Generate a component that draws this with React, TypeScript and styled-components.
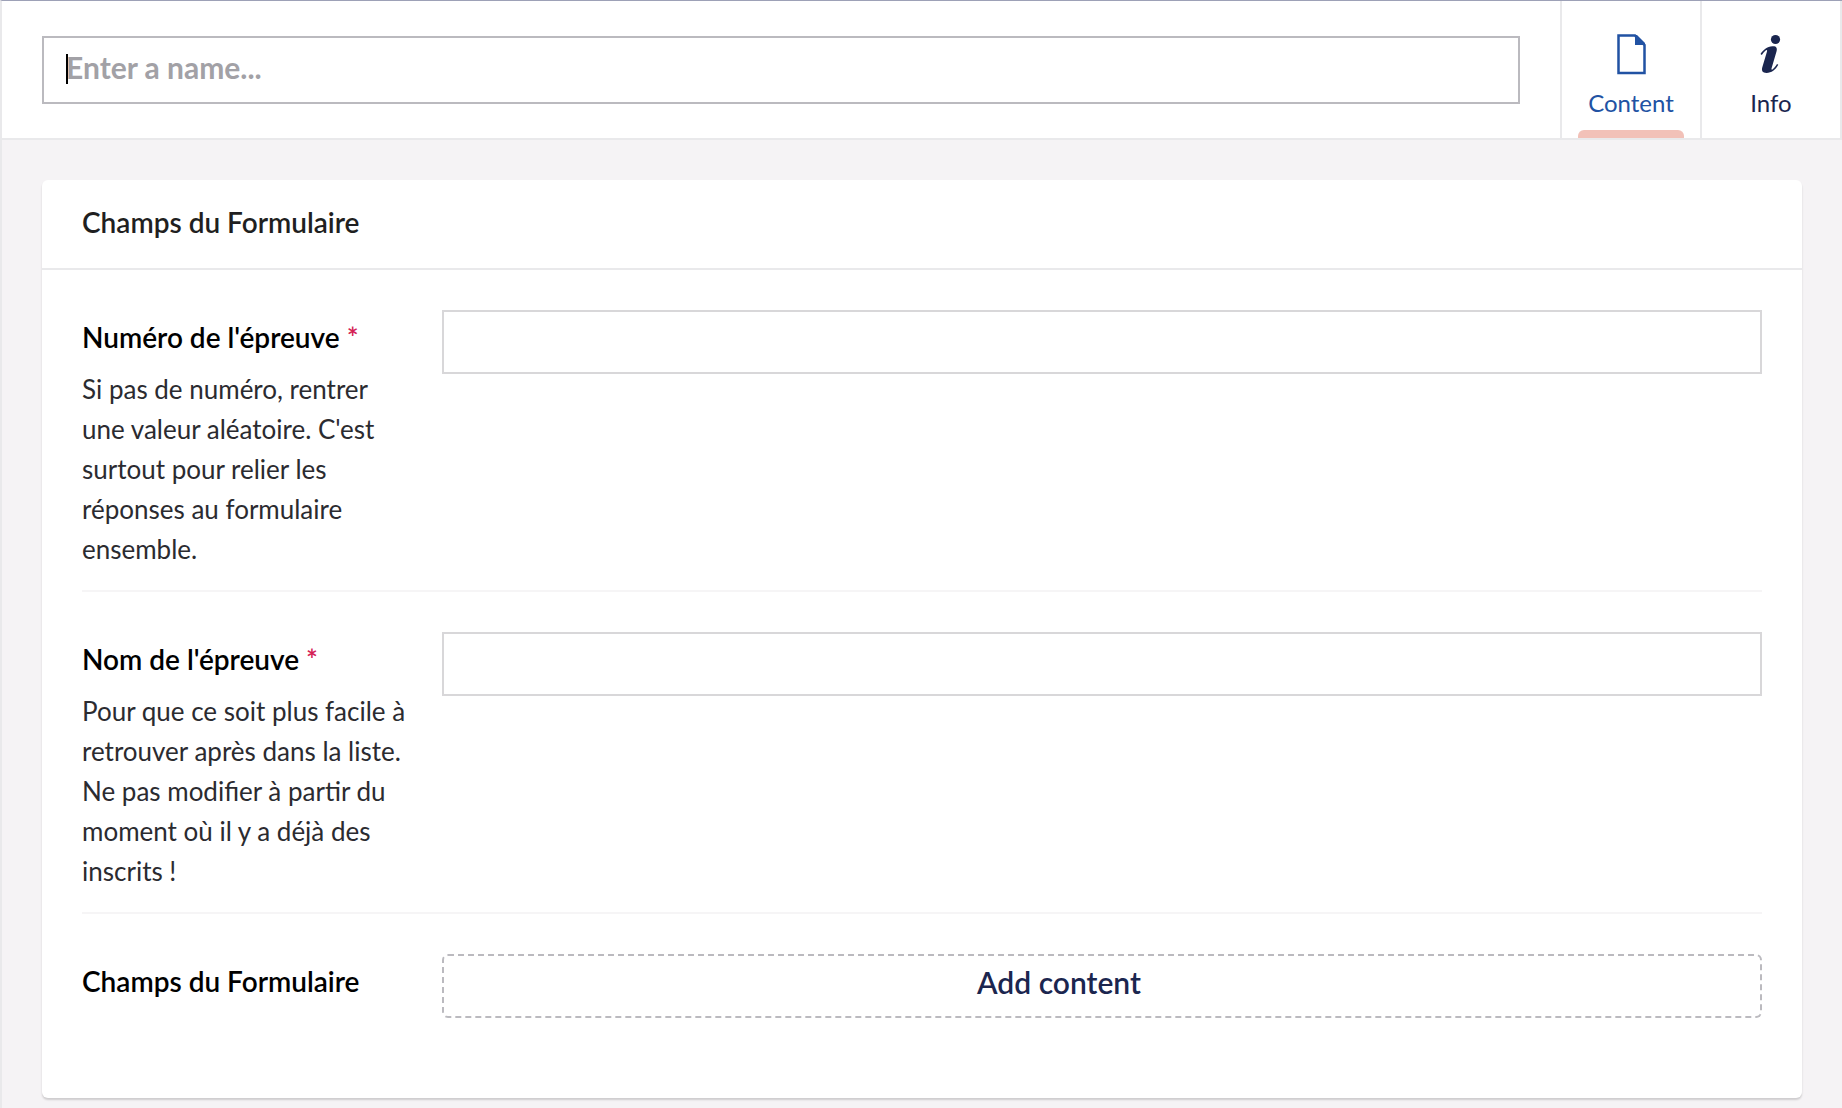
import React from "react";
import styled, { createGlobalStyle } from "styled-components";

const GlobalStyle = createGlobalStyle`
  *, *::before, *::after { box-sizing: border-box; }
  body {
    margin: 0;
    background: #f5f3f5;
    color: #000;
    font-family: Lato, "Liberation Sans", sans-serif;
  }
  button, input { font-family: inherit; }
`;

const Page = styled.div`
  min-height: 100vh;
  border-top: 1px solid #9da1b7;
  border-left: 2px solid #e9e9eb;
`;

const Header = styled.header`
  display: flex;
  height: 139px;
  background: #fff;
  border-bottom: 2px solid #e9e9eb;
`;

const NameArea = styled.div`
  flex: 1;
  display: flex;
  padding: 35px 40px 0;
`;

const NameBox = styled.div`
  position: relative;
  flex: 1;
  height: 68px;
`;

const NameInput = styled.input`
  width: 100%;
  height: 68px;
  padding: 0 22px 6px;
  border: 2px solid #bbbabf;
  border-radius: 0;
  background: #fff;
  color: #000;
  font-size: 30px;
  font-weight: 700;
  caret-color: transparent;
  outline: none;

  &::placeholder { color: #a2a1a6; opacity: 1; }
`;

const Caret = styled.span`
  position: absolute;
  left: 24px;
  top: 18px;
  width: 2px;
  height: 30px;
  background: #000;
`;

const Tabs = styled.nav`
  display: flex;
  border-right: 2px solid #e9e9eb;
`;

const Tab = styled.button<{ $active?: boolean }>`
  position: relative;
  display: flex;
  flex-direction: column;
  align-items: center;
  width: 140px;
  padding: 32px 0 0;
  border: 0;
  border-left: 2px solid #e9e9eb;
  background: #fff;
  color: ${(p) => (p.$active ? "#2152a3" : "#1b264f")};
  font-size: 24px;
  line-height: 32px;
  cursor: pointer;

  svg { display: block; margin-bottom: 10px; }

  &::after {
    content: "";
    display: ${(p) => (p.$active ? "block" : "none")};
    position: absolute;
    left: 16px;
    right: 16px;
    bottom: 0;
    height: 8px;
    border-radius: 6px 6px 0 0;
    background: #f2c1b8;
  }
`;

const Main = styled.main`
  padding: 40px 40px 10px;
`;

const Card = styled.section`
  padding-bottom: 60px;
  background: #fff;
  border-radius: 6px;
  box-shadow: 0 2px 2px rgba(0, 0, 0, 0.16);
`;

const CardTitle = styled.h2`
  margin: 0;
  padding: 24px 40px 28px;
  border-bottom: 2px solid #e9e9eb;
  color: #1f1f21;
  font-size: 28px;
  font-weight: 600;
  line-height: 36px;
`;

const Fields = styled.div`
  padding: 0 40px;
`;

const Field = styled.div`
  display: grid;
  grid-template-columns: 326px 1fr;
  column-gap: 34px;
  align-items: start;
  padding: 40px 0 20px;

  & + & { border-top: 2px solid #f6f5f6; }
`;

const Caption = styled.div`
  padding: 9px 0 1px;
`;

const Label = styled.label`
  display: block;
  font-size: 28px;
  font-weight: 600;
  line-height: 36px;
`;

const Required = styled.span`
  color: #d42054;
`;

const Description = styled.p`
  margin: 14px 0 0;
  color: #2b2b30;
  font-size: 26px;
  line-height: 40px;
`;

const TextInput = styled.input`
  width: 100%;
  height: 64px;
  padding: 0 12px;
  border: 2px solid #d8d7d9;
  border-radius: 0;
  background: #fff;
  font-size: 26px;
  outline: none;
`;

const AddButton = styled.button`
  width: 100%;
  height: 64px;
  padding: 0 86px 8px 0;
  border: 2px dashed #bbbabf;
  border-radius: 6px;
  background: #fff;
  color: #1b264f;
  font-size: 30px;
  font-weight: 600;
  cursor: pointer;
`;

const DocumentIcon = () => (
  <svg width="30" height="44" viewBox="0 0 30 44" aria-hidden="true">
    <path d="M2.500 2.500H19L28.500 12V40H2.500Z" fill="none" stroke="#2152a3" strokeWidth="2.500" />
    <path d="M19 2H21L29 10V12H19Z" fill="#2152a3" />
  </svg>
);

const InfoIcon = () => (
  <svg width="30" height="44" viewBox="0 0 30 44" aria-hidden="true">
    <circle cx="19.500" cy="6.500" r="4.600" fill="#1b264f" />
    <path
      d="M4.500 21C7 17 11 13.500 16.500 13.200C20.500 13 21.500 15 20.500 18.500L15.500 35.500C15.200 36.800 16 37 17 36C18.800 34.500 20 32.800 21 31L22.300 31.800C19.500 36.800 15.500 40 10.500 40C6.500 40 5.300 37.800 6.300 34.300L11 18.500C11.400 17 10.800 16.500 9.600 17.500C8.200 18.600 7 20.200 5.800 21.900Z"
      fill="#1b264f"
    />
  </svg>
);

interface TextFieldProps {
  id: string;
  label: string;
  description: string;
}

const TextField = ({ id, label, description }: TextFieldProps) => (
  <Field>
    <Caption>
      <Label htmlFor={id}>
        {label} <Required>*</Required>
      </Label>
      <Description id={`${id}-help`}>{description}</Description>
    </Caption>
    <TextInput id={id} type="text" required aria-describedby={`${id}-help`} />
  </Field>
);

export default function App() {
  return (
    <Page>
      <GlobalStyle />
      <Header>
        <NameArea>
          <NameBox>
            <NameInput type="text" placeholder="Enter a name..." aria-label="Enter a name..." />
            <Caret />
          </NameBox>
        </NameArea>
        <Tabs>
          <Tab type="button" $active>
            <DocumentIcon />
            Content
          </Tab>
          <Tab type="button">
            <InfoIcon />
            Info
          </Tab>
        </Tabs>
      </Header>
      <Main>
        <Card>
          <CardTitle>Champs du Formulaire</CardTitle>
          <Fields>
            <TextField
              id="numero"
              label="Numéro de l'épreuve"
              description="Si pas de numéro, rentrer une valeur aléatoire. C'est surtout pour relier les réponses au formulaire ensemble."
            />
            <TextField
              id="nom"
              label="Nom de l'épreuve"
              description="Pour que ce soit plus facile à retrouver après dans la liste. Ne pas modifier à partir du moment où il y a déjà des inscrits !"
            />
            <Field>
              <Caption>
                <Label htmlFor="champs">Champs du Formulaire</Label>
              </Caption>
              <AddButton id="champs" type="button" aria-label="Add content">
                Add content
              </AddButton>
            </Field>
          </Fields>
        </Card>
      </Main>
    </Page>
  );
}
